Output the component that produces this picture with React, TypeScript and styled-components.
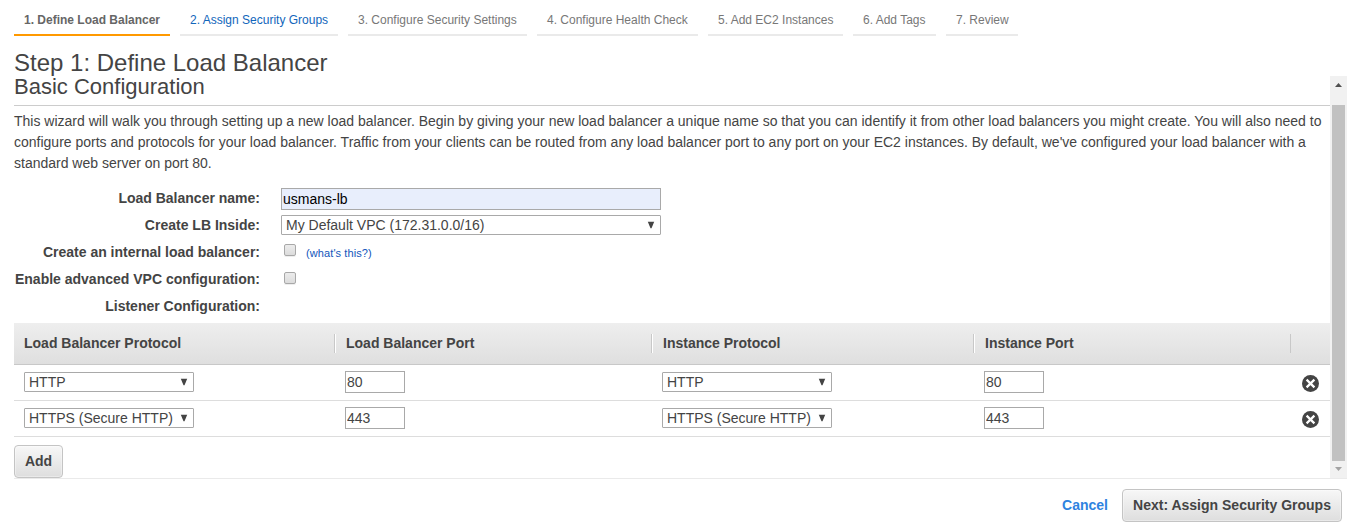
import React from "react";
import styled, { createGlobalStyle } from "styled-components";

const GlobalStyle = createGlobalStyle`
  * { box-sizing: border-box; }
  html, body { margin: 0; padding: 0; background: #fff; overflow: hidden; }
  body, input, select, button { font-family: "Liberation Sans", Arial, sans-serif; font-size: 14px; color: #444; }
`;

const Page = styled.div`
  width: 1354px;
  height: 529px;
  padding: 0 7px 0 14px;
  display: flex;
  flex-direction: column;
`;

const Steps = styled.nav`
  display: flex;
  gap: 10px;
  height: 36px;
  flex: none;
`;

const Step = styled.div<{ $width: number; $state: "active" | "link" | "idle" }>`
  width: ${(p) => p.$width}px;
  height: 36px;
  padding: 13px 0 0 10px;
  line-height: 14px;
  font-size: 12px;
  white-space: nowrap;
  font-weight: ${(p) => (p.$state === "active" ? 700 : 400)};
  color: ${(p) => (p.$state === "active" ? "#666" : p.$state === "link" ? "#1166bb" : "#777")};
  border-bottom: 2px solid ${(p) => (p.$state === "active" ? "#f90" : "#eaeaea")};
`;

const Title = styled.h1`
  margin: 13px 0 0;
  height: 27px;
  line-height: 28px;
  font-size: 24px;
  font-weight: 400;
  flex: none;
`;

const Scroller = styled.section`
  display: flex;
  height: 403px;
  flex: none;
  border-bottom: 1px solid #eaeaea;
`;

const Content = styled.div`
  width: 1316px;
  display: flex;
  flex-direction: column;
  align-items: flex-start;
`;

const Subtitle = styled.h2`
  margin: 0;
  width: 100%;
  height: 30px;
  line-height: 21px;
  font-size: 22px;
  font-weight: 400;
  border-bottom: 1px solid #ccc;
`;

const Intro = styled.p`
  margin: 5px 0 10px;
  line-height: 21px;
  white-space: nowrap;
`;

const IntroLine = styled.span`
  display: block;
`;

const FormRow = styled.div`
  display: grid;
  grid-template-columns: 246px auto;
  column-gap: 21px;
  align-items: center;
  height: 27px;
`;

const Label = styled.label`
  text-align: right;
  font-weight: 700;
  line-height: 18px;
  white-space: nowrap;
`;

const Field = styled.div`
  display: flex;
  align-items: center;
`;

const TextInput = styled.input<{ $width: number; $filled?: boolean }>`
  width: ${(p) => p.$width}px;
  height: 22px;
  margin: ${(p) => (p.$filled ? "2px 0 0" : "0")};
  padding: 1px;
  border: 1px solid #a9a9a9;
  border-radius: 0;
  outline: none;
  background: ${(p) => (p.$filled ? "#e8eefc" : "#fff")};
  color: ${(p) => (p.$filled ? "#000" : "#444")};
`;

const SelectFrame = styled.div<{ $width: number }>`
  display: grid;
  grid-template-columns: 1fr 15px;
  align-items: center;
  width: ${(p) => p.$width}px;
  height: 20px;
  border: 1px solid #a9a9a9;
  border-radius: 1px;
  background: #fff;
`;

const NativeSelect = styled.select`
  appearance: none;
  border: 0;
  margin: 0;
  padding: 0 0 0 4px;
  height: 18px;
  min-width: 0;
  width: 100%;
  background: transparent;
  outline: none;
`;

const Checkbox = styled.input<{ $lift: number }>`
  appearance: none;
  width: 12px;
  height: 12px;
  margin: 0 10px ${(p) => p.$lift}px 3px;
  border: 1px solid #a8a8a8;
  border-radius: 2px;
  background: linear-gradient(#ececec, #dcdcdc);
  box-shadow: 0 1px 0 #eee;
`;

const HelpLink = styled.a`
  font-size: 11px;
  letter-spacing: 0.1px;
  color: #1155bb;
  line-height: 14px;
  padding-top: 2px;
`;

const Table = styled.div`
  width: 100%;
  margin-top: 4px;
`;

const TableHead = styled.div`
  display: grid;
  grid-template-columns: 320px 317px 322px 317px 40px;
  align-items: center;
  height: 42px;
  background: linear-gradient(#eee, #dfdfdf);
  border-bottom: 1px solid #c8c8c8;
`;

const HeadCell = styled.div`
  height: 19px;
  line-height: 18px;
  padding-left: 11px;
  font-weight: 700;
  border-left: 1px solid #c8c8c8;
  box-shadow: inset 1px 0 0 #fff;
  &:first-child { border: 0; padding-left: 10px; box-shadow: none; }
  &:last-child { box-shadow: none; }
`;

const TableRow = styled.div`
  display: grid;
  grid-template-columns: 321px 317px 322px 316px 40px;
  align-items: center;
  height: 36px;
  border-bottom: 1px solid #ddd;
`;

const Cell = styled.div`
  display: flex;
  align-items: center;
  height: 35px;
  padding: 0 0 1px 10px;
`;

const RemoveButton = styled.button`
  display: block;
  border: 0;
  padding: 3px 0 0 1px;
  margin: 0 0 0 1px;
  background: none;
  svg { display: block; }
`;

const Button = styled.button<{ $width: number }>`
  width: ${(p) => p.$width}px;
  height: 33px;
  flex: none;
  display: block;
  padding: 0 0 2px;
  border: 1px solid #c4c4c4;
  border-radius: 4px;
  background: linear-gradient(#f7f7f7, #dedede);
  box-shadow: inset 0 0 0 1px rgba(255, 255, 255, 0.35);
  font-weight: 700;
  white-space: nowrap;
`;

const AddBar = styled.div`
  padding-top: 8px;
`;

const ScrollTrack = styled.div`
  width: 17px;
  height: 402px;
  background: #f1f1f1;
  display: flex;
  flex-direction: column;
  align-items: center;
`;

const ScrollArrow = styled.div<{ $height: number }>`
  height: ${(p) => p.$height}px;
  width: 17px;
  svg { display: block; }
`;

const Thumb = styled.div`
  flex: 1;
  width: 13px;
  background: #c1c1c1;
`;

const Footer = styled.footer`
  display: flex;
  justify-content: flex-end;
  align-items: center;
  gap: 14px;
  padding: 10px 5px 0 0;
`;

const Cancel = styled.a`
  font-weight: 700;
  padding-bottom: 2px;
  color: #2e83e0;
`;

const steps = [
  { text: "1. Define Load Balancer", width: 156, state: "active" },
  { text: "2. Assign Security Groups", width: 158, state: "link" },
  { text: "3. Configure Security Settings", width: 179, state: "idle" },
  { text: "4. Configure Health Check", width: 161, state: "idle" },
  { text: "5. Add EC2 Instances", width: 135, state: "idle" },
  { text: "6. Add Tags", width: 83, state: "idle" },
  { text: "7. Review", width: 72, state: "idle" },
] as const;

const listeners = [
  { protocol: "HTTP", port: "80" },
  { protocol: "HTTPS (Secure HTTP)", port: "443" },
];

function Select({ value, width }: { value: string; width: number }) {
  return (
    <SelectFrame $width={width}>
      <NativeSelect defaultValue={value}>
        <option>{value}</option>
      </NativeSelect>
      <svg width="15" height="18" viewBox="0 0 15 18">
        <path d="M2.8 5.8h6.4L6.5 12.2h-1z" fill="#444" />
      </svg>
    </SelectFrame>
  );
}

function RemoveIcon() {
  return (
    <svg width="17" height="17" viewBox="0 0 17 17">
      <circle cx="8.5" cy="8.5" r="8.5" fill="#444" />
      <path d="M4.6 4.6l7.8 7.8M12.4 4.6l-7.8 7.8" stroke="#fff" strokeWidth="2.2" />
    </svg>
  );
}

export default function App() {
  return (
    <Page>
      <GlobalStyle />
      <Steps>
        {steps.map((s) => (
          <Step key={s.text} $width={s.width} $state={s.state}>{s.text}</Step>
        ))}
      </Steps>
      <Title>Step 1: Define Load Balancer</Title>
      <Scroller>
        <Content>
          <Subtitle>Basic Configuration</Subtitle>
          <Intro>
            <IntroLine>This wizard will walk you through setting up a new load balancer. Begin by giving your new load balancer a unique name so that you can identify it from other load balancers you might create. You will also need to</IntroLine>
            <IntroLine>configure ports and protocols for your load balancer. Traffic from your clients can be routed from any load balancer port to any port on your EC2 instances. By default, we've configured your load balancer with a</IntroLine>
            <IntroLine>standard web server on port 80.</IntroLine>
          </Intro>
          <FormRow>
            <Label>Load Balancer name:</Label>
            <Field><TextInput $width={380} $filled defaultValue="usmans-lb" /></Field>
          </FormRow>
          <FormRow>
            <Label>Create LB Inside:</Label>
            <Field><Select width={380} value="My Default VPC (172.31.0.0/16)" /></Field>
          </FormRow>
          <FormRow>
            <Label>Create an internal load balancer:</Label>
            <Field><Checkbox $lift={3} type="checkbox" /><HelpLink>(what's this?)</HelpLink></Field>
          </FormRow>
          <FormRow>
            <Label>Enable advanced VPC configuration:</Label>
            <Field><Checkbox $lift={1} type="checkbox" /></Field>
          </FormRow>
          <FormRow>
            <Label>Listener Configuration:</Label>
          </FormRow>
          <Table>
            <TableHead>
              <HeadCell>Load Balancer Protocol</HeadCell>
              <HeadCell>Load Balancer Port</HeadCell>
              <HeadCell>Instance Protocol</HeadCell>
              <HeadCell>Instance Port</HeadCell>
              <HeadCell />
            </TableHead>
            {listeners.map((l) => (
              <TableRow key={l.port}>
                <Cell><Select width={170} value={l.protocol} /></Cell>
                <Cell><TextInput $width={60} defaultValue={l.port} /></Cell>
                <Cell><Select width={170} value={l.protocol} /></Cell>
                <Cell><TextInput $width={60} defaultValue={l.port} /></Cell>
                <Cell><RemoveButton aria-label="Remove"><RemoveIcon /></RemoveButton></Cell>
              </TableRow>
            ))}
          </Table>
          <AddBar><Button $width={49}>Add</Button></AddBar>
        </Content>
        <ScrollTrack>
          <ScrollArrow $height={29}>
            <svg width="17" height="17" viewBox="0 0 17 17"><path d="M5 11l3.5-4L12 11z" fill="#505050" /></svg>
          </ScrollArrow>
          <Thumb />
          <ScrollArrow $height={17}>
            <svg width="17" height="17" viewBox="0 0 17 17"><path d="M5 6h7L8.5 10z" fill="#a3a3a3" /></svg>
          </ScrollArrow>
        </ScrollTrack>
      </Scroller>
      <Footer>
        <Cancel>Cancel</Cancel>
        <Button $width={220}>Next: Assign Security Groups</Button>
      </Footer>
    </Page>
  );
}
